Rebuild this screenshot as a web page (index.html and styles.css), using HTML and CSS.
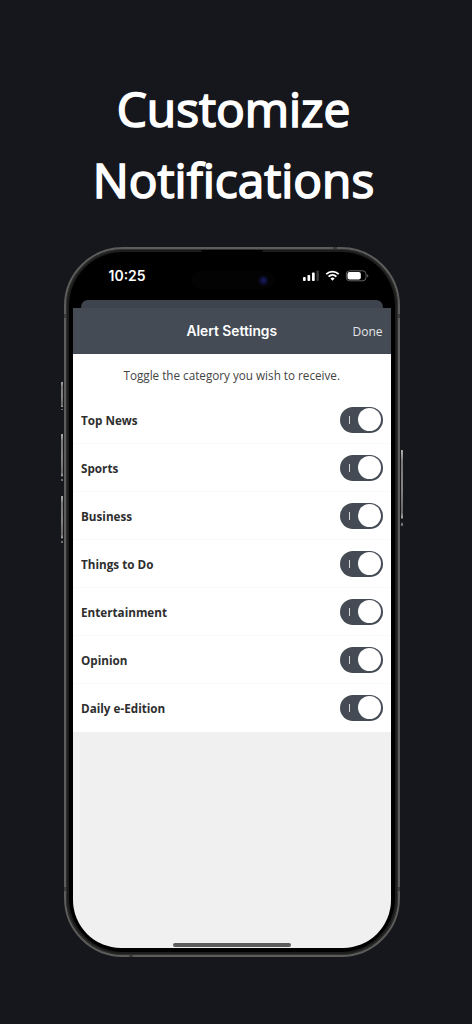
FILE: index.html
```html
<!DOCTYPE html>
<html lang="en">
<head>
    <meta charset="UTF-8">
    <meta name="viewport" content="width=device-width, initial-scale=1.0">
    <title>Customize Notifications</title>
    <link rel="stylesheet" href="styles.css">
</head>
<body>
    <h1 class="headline"><span>Customize</span><span>Notifications</span></h1>

    <div class="phone">
        <!-- side buttons -->
        <i class="key action"></i>
        <i class="key vol-up"></i>
        <i class="key vol-down"></i>
        <i class="key power"></i>
        <!-- antenna bands -->
        <i class="band band-left"></i>
        <i class="band band-right"></i>
        <i class="band band-left low"></i>
        <i class="band band-right low"></i>
        <i class="band-h band-top"></i>
        <i class="band-h band-bottom"></i>
        <i class="speaker"></i>

        <div class="screen">
            <div class="status-bar">
                <span class="time">10:25</span>
                <div class="island"><i class="camera"></i></div>
                <svg class="status-icons" width="67" height="12" viewBox="0 0 67 12">
                    <g fill="#fff">
                        <rect x="0" y="7" width="2.7" height="4" rx=".8"/>
                        <rect x="4.5" y="5" width="2.7" height="6" rx=".8"/>
                        <rect x="9" y="2.5" width="2.7" height="8.5" rx=".8"/>
                        <rect x="13.4" y="0.5" width="2.5" height="10.5" rx=".8" fill="#363636"/>
                    </g>
                    <g fill="none" stroke="#fff" stroke-width="1.9">
                        <path d="M23.3 4.1a9 9 0 0 1 12.4 0"/>
                        <path d="M25.6 6.6a5.7 5.7 0 0 1 7.8 0"/>
                    </g>
                    <path d="M27.4 8.5a3.2 3.2 0 0 1 4.2 0l-2.1 2.3z" fill="#fff"/>
                    <rect x="43.3" y="0.8" width="19.7" height="10" rx="3.3" fill="none" stroke="#606060"/>
                    <rect x="44.5" y="2" width="13.3" height="7.6" rx="2.1" fill="#fff"/>
                    <path d="M64.2 4.2q2.4 1.5 0 3.2z" fill="#707070"/>
                </svg>
            </div>
            <div class="back-sheet"></div>
            <div class="header">
                <span class="title">Alert Settings</span>
                <a class="done">Done</a>
            </div>
            <div class="content">
                <p class="intro">Toggle the category you wish to receive.</p>
                <div class="row"><span>Top News</span><div class="toggle"></div></div>
                <div class="row"><span>Sports</span><div class="toggle"></div></div>
                <div class="row"><span>Business</span><div class="toggle"></div></div>
                <div class="row"><span>Things to Do</span><div class="toggle"></div></div>
                <div class="row"><span>Entertainment</span><div class="toggle"></div></div>
                <div class="row"><span>Opinion</span><div class="toggle"></div></div>
                <div class="row"><span>Daily e-Edition</span><div class="toggle"></div></div>
            </div>
            <div class="home-bar"></div>
        </div>
    </div>
</body>
</html>
```
FILE: styles.css
```css
* { box-sizing: border-box; }
body { margin: 0; height: 1024px; overflow: hidden; background: #16171c; font-family: "Open Sans", "Noto Sans", sans-serif; }

.headline { margin: 0; padding: 73px 5px 0 0; height: 247px; display: flex; flex-direction: column; align-items: center; color: #fff; font-size: 47.8px; font-weight: 400; line-height: 71px; -webkit-text-stroke: 1.7px #fff; }
.headline span { display: block; }

/* phone body */
.phone { position: relative; margin-left: 64px; width: 335.5px; height: 710px; padding: 7px 7px 6px; border: 2px solid #5c5c5a; border-radius: 59px; background: #000; box-shadow: inset 0 0 0 1px #30302f, inset 0 0 0 3px #1c1c1c; }
.key { position: absolute; width: 2px; border-radius: 1px 0 0 1px; background: linear-gradient(#b5b4b0, #7a7976 15%, #85847f 50%, #6b6a66 82%, #a5a4a0 89%, #16171c 91%, #16171c 95%, #777 97%); }
.action { left: -5px; top: 133px; height: 28px; }
.vol-up { left: -5px; top: 185px; height: 47px; }
.vol-down { left: -5px; top: 247px; height: 47px; }
.power { right: -5px; top: 201px; height: 76px; border-radius: 0 1px 1px 0; }
.band { position: absolute; width: 2px; height: 4px; top: 65px; background: #3c3c3b; }
.band-left { left: -2px; }
.band-right { right: -2px; }
.low { top: 638px; }
.band-h { position: absolute; width: 4px; height: 2px; background: #3c3c3b; }
.band-top { top: -2px; left: 267px; }
.band-bottom { bottom: -2px; left: 63px; }
.speaker { position: absolute; top: 1px; left: 135px; width: 62px; height: 2px; border-radius: 0 0 2px 2px; background: #000; }

/* screen */
.screen { width: 317.5px; height: 692px; display: flex; flex-direction: column; overflow: hidden; border-radius: 48px; background: linear-gradient(#000 60px, #f0f0f0 60px); }
.status-bar { flex: none; height: 44px; display: flex; align-items: flex-start; color: #fff; }
.time { width: 82px; margin: 10px 0 0 35.5px; font: 600 14px/20px Inter, sans-serif; }
.island { width: 84px; height: 18px; margin-top: 15px; display: flex; align-items: center; justify-content: flex-end; border-radius: 9px; background: #030303; }
.camera { width: 11px; height: 11px; margin-right: 6px; border-radius: 50%; background: radial-gradient(#17174e 0 20%, #0b0b34 40%, #07060b 65%); }
.status-icons { margin: 14px 0 0 28px; }
.back-sheet { flex: none; height: 8px; margin: 0 8px; border-radius: 7px 7px 0 0; background: #3d444d; }
.header { flex: none; height: 46px; padding: 0 8px; display: grid; grid-template-columns: 1fr auto 1fr; align-items: center; background: #444b55; color: #fff; }
.title { grid-column: 2; font: 600 13.8px/20px Inter, sans-serif; }
.done { justify-self: end; font-size: 12px; line-height: 18px; padding-top: 1px; color: #e4e6e8; }

.content { flex: none; background: #fff; }
.intro { margin: 0; padding-top: 12px; height: 42px; text-align: center; font-size: 11.7px; line-height: 18px; color: #444; }
.row { height: 48px; padding: 0 8px; display: flex; align-items: center; justify-content: space-between; border-bottom: 1px solid #fafafa; font-size: 11.7px; font-weight: 700; color: #2e2e2e; }
.row:last-child { border-color: #fff; }

.toggle { width: 43px; height: 26px; padding: 1.5px; display: flex; align-items: center; justify-content: space-between; border-radius: 13px; background: #444b55; }
.toggle::before { content: ""; width: 1px; height: 8px; margin-left: 8px; background: #d5d7d9; }
.toggle::after { content: ""; width: 23px; height: 23px; border-radius: 50%; background: #fff; }

.home-bar { width: 118px; height: 4px; margin: auto auto 1px; border-radius: 2px; background: #5c5c5c; }
```
